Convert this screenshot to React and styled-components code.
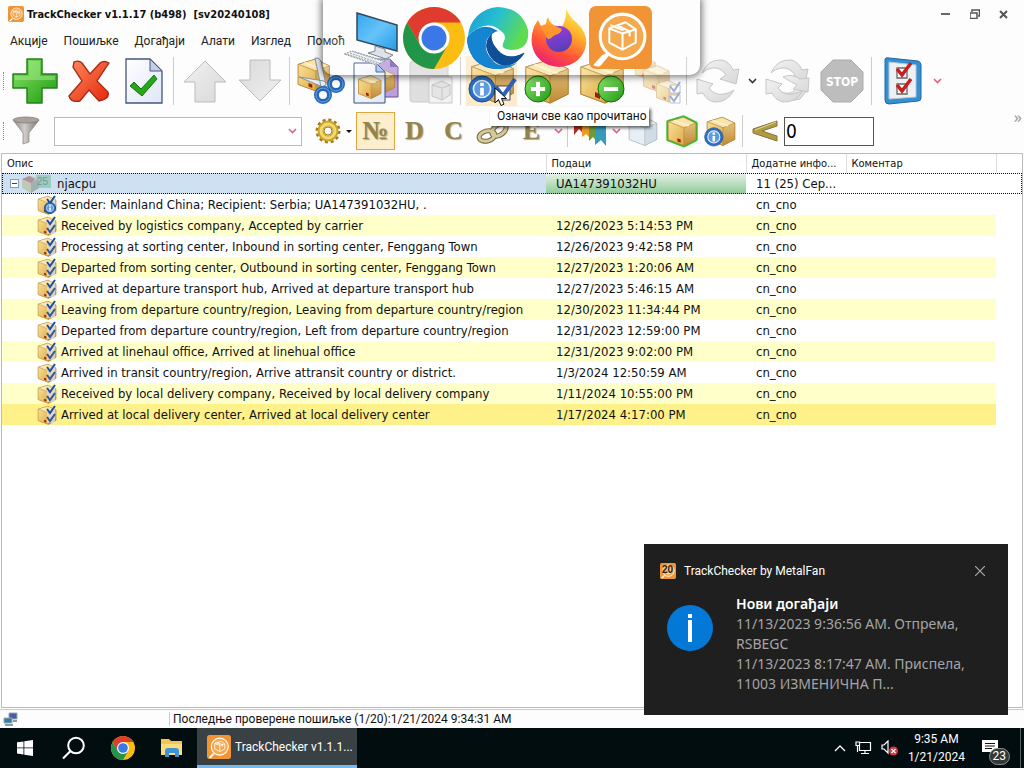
import React from 'react'
import styled, { createGlobalStyle } from 'styled-components';

const tahoma = '"DejaVu Sans Condensed", "DejaVu Sans", sans-serif';
const segoe = '"Noto Sans", "Open Sans", sans-serif';
const compact = 'Roboto, "Noto Sans", sans-serif';

const events = [
    { text: 'Sender: Mainland China; Recipient: Serbia; UA147391032HU, .', date: '', info: true },
    { text: 'Received by logistics company, Accepted by carrier', date: '12/26/2023 5:14:53 PM' },
    { text: 'Processing at sorting center, Inbound in sorting center, Fenggang Town', date: '12/26/2023 9:42:58 PM' },
    { text: 'Departed from sorting center, Outbound in sorting center, Fenggang Town', date: '12/27/2023 1:20:06 AM' },
    { text: 'Arrived at departure transport hub, Arrived at departure transport hub', date: '12/27/2023 5:46:15 AM' },
    { text: 'Leaving from departure country/region, Leaving from departure country/region', date: '12/30/2023 11:34:44 PM' },
    { text: 'Departed from departure country/region, Left from departure country/region', date: '12/31/2023 12:59:00 PM' },
    { text: 'Arrived at linehaul office, Arrived at linehual office', date: '12/31/2023 9:02:00 PM' },
    { text: 'Arrived in transit country/region, Arrive attransit country or district.', date: '1/3/2024 12:50:59 AM' },
    { text: 'Received by local delivery company, Received by local delivery company', date: '1/11/2024 10:55:00 PM' },
    { text: 'Arrived at local delivery center, Arrived at local delivery center', date: '1/17/2024 4:17:00 PM', latest: true },
];

const menus = ['Акције', 'Пошиљке', 'Догађаји', 'Алати', 'Изглед', 'Помоћ'];

const GlobalStyle = createGlobalStyle`
  * { box-sizing: border-box; }
  body { margin: 0; background: #fdfdfd; overflow: hidden; }
  button, input { font-family: inherit; }
  svg { display: block; flex: none; }
`;

/* gradients shared by every icon */
const Gradients = () => (
    <HiddenSvg aria-hidden="true">
        <defs>
            <linearGradient id="green" x1="0" y1="0" x2="1" y2="1">
                <stop offset="0" stopColor="#8be56b" /><stop offset="1" stopColor="#1f9a12" />
            </linearGradient>
            <linearGradient id="red" x1="0" y1="0" x2="1" y2="1">
                <stop offset="0" stopColor="#ff8a5c" /><stop offset="1" stopColor="#e3260c" />
            </linearGradient>
            <linearGradient id="paper" x1="0" y1="0" x2="1" y2="1">
                <stop offset="0" stopColor="#ffffff" /><stop offset="1" stopColor="#dfe6f7" />
            </linearGradient>
            <linearGradient id="grey" x1="0" y1="0" x2="1" y2="1">
                <stop offset="0" stopColor="#f1f1f1" /><stop offset="1" stopColor="#d8d8d8" />
            </linearGradient>
            <linearGradient id="left" x1="0" y1="0" x2="1" y2="1">
                <stop offset="0" stopColor="#f8e09a" /><stop offset="1" stopColor="#dfab45" />
            </linearGradient>
            <linearGradient id="right" x1="0" y1="0" x2="0" y2="1">
                <stop offset="0" stopColor="#e2c07a" /><stop offset="1" stopColor="#c08a35" />
            </linearGradient>
            <linearGradient id="screen" x1="0" y1="0" x2="1" y2="1">
                <stop offset="0" stopColor="#35a6f0" /><stop offset="0.5" stopColor="#66c3f8" /><stop offset="1" stopColor="#239ae8" />
            </linearGradient>
            <linearGradient id="edgeTop" x1="0" y1="0" x2="1" y2="0.4">
                <stop offset="0" stopColor="#189bd8" /><stop offset="0.5" stopColor="#26bfd0" /><stop offset="1" stopColor="#5fdb52" />
            </linearGradient>
            <linearGradient id="edgeBlue" x1="0" y1="0" x2="1" y2="1">
                <stop offset="0" stopColor="#1590d9" /><stop offset="1" stopColor="#0a54a2" />
            </linearGradient>
            <linearGradient id="fox" x1="0.8" y1="0" x2="0.3" y2="1">
                <stop offset="0" stopColor="#fff04a" /><stop offset="0.35" stopColor="#ffb02c" /><stop offset="0.7" stopColor="#ff5238" /><stop offset="1" stopColor="#e91f7b" />
            </linearGradient>
            <linearGradient id="globe" x1="0" y1="0" x2="0.3" y2="1">
                <stop offset="0" stopColor="#a13be0" /><stop offset="1" stopColor="#5b3fb8" />
            </linearGradient>
            <linearGradient id="funnel" x1="0" y1="0" x2="1" y2="0">
                <stop offset="0" stopColor="#8c8785" /><stop offset="0.45" stopColor="#d2cdca" /><stop offset="1" stopColor="#777170" />
            </linearGradient>
        </defs>
    </HiddenSvg>
);

const Parcel = ({ pale, transform }) => (
    <g transform={transform} stroke={pale ? '#9fb0bc' : '#8f641c'} strokeWidth="1.2" strokeLinejoin="round">
        <path d="M3 10 26 3 45 12 45 37 27 46 3 37Z" fill="#e6b455" />
        <g strokeWidth="0.7" stroke={pale ? '#a9b9c4' : '#b98532'}>
            <path d="M3 10 26 3 45 12 27 19Z" fill={pale ? '#f4f9fc' : '#f9e5ac'} />
            <path d="M3 10 27 19V46L3 37Z" fill={pale ? '#e6eff5' : 'url(#left)'} />
            <path d="M27 19 45 12V37L27 46Z" fill={pale ? '#cfdde6' : 'url(#right)'} />
            <path d="M13 7 36 15.500 33 17 10 8Z" fill={pale ? '#fff' : '#fdf2cf'} stroke="none" />
        </g>
        {!pale && <path d="M17 35 22 37V42L17 40Z" fill="#9c1d12" stroke="none" />}
    </g>
);

const Round = ({ cx, cy, r, kind }) => (
    <g>
        <circle cx={cx} cy={cy} r={r} fill={kind === 'info' ? '#2d6fc4' : 'url(#green)'} stroke={kind === 'info' ? '#194b91' : '#12700d'} />
        {kind === 'info' && <circle cx={cx} cy={cy} r={r * 0.66} fill="#5d9ade" stroke="#e3effc" strokeWidth={r * 0.12} />}
        {kind === 'info' && <path d={`M${cx} ${cy - r * 0.1}V${cy + r * 0.5}M${cx} ${cy - r * 0.48}V${cy - r * 0.24}`} stroke="#fff" strokeWidth={r * 0.28} />}
        {kind !== 'info' && <path d={`M${cx - r * 0.55} ${cy}h${r * 1.1}`} stroke="#fff" strokeWidth="4" />}
        {kind === 'plus' && <path d={`M${cx} ${cy - r * 0.55}v${r * 1.1}`} stroke="#fff" strokeWidth="4" />}
    </g>
);

const PlusIcon = () => (
    <svg width="48" height="48" viewBox="0 0 48 48">
        <path d="M17 2h15v15h15v14H32v15H17V31H3V17h14Z" fill="url(#green)" stroke="#21821a" strokeWidth="1.500" strokeLinejoin="round" />
        <path d="M19 4h11v15h15v4H5v-4h14Z" fill="#a5ee89" opacity="0.5" />
    </svg>
);

const CrossIcon = () => (
    <svg width="48" height="48" viewBox="0 0 48 48">
        <path d="M9 5Q14 3 17 6L25 17 35 6Q39 3 44 6L32 24 43 35Q45 40 38 43L34 44 24 33 15 44Q6 46 4 39L17 24 8 10Z" fill="url(#red)" stroke="#a52814" strokeWidth="1.300" />
    </svg>
);

const CheckDocIcon = () => (
    <svg width="48" height="48" viewBox="0 0 48 48">
        <path d="M6 2H30L42 14V46H6Z" fill="url(#paper)" stroke="#46577e" strokeWidth="1.300" />
        <path d="M30 2V14H42Z" fill="#c3cee4" stroke="#46577e" />
        <path d="M10 29 14 25 21 32 34 18 37 22 22 39Z" fill="#27a51b" stroke="#187511" strokeLinejoin="round" />
    </svg>
);

const ArrowIcon = ({ down }) => (
    <svg width="48" height="48" viewBox="0 0 48 48">
        <path d="M24 4 45 25H34V45H14V25H3Z" transform={down ? 'rotate(180 24 24)' : undefined} fill="url(#grey)" stroke="#bcbcbc" strokeLinejoin="round" />
    </svg>
);

const CutIcon = () => (
    <svg width="50" height="48" viewBox="0 0 50 48">
        <Parcel transform="scale(.74)" />
        <path d="M19 1Q23 0 25 4L30 28 25 30ZM3 20 28 24 34 29 27 30Z" fill="#e9edf2" stroke="#8691a0" />
        <circle cx="40" cy="27" r="6.500" fill="none" stroke="#2467b8" strokeWidth="5" />
        <circle cx="27" cy="38" r="6.500" fill="none" stroke="#2467b8" strokeWidth="5" />
        <circle cx="40" cy="27" r="7" fill="none" stroke="#6ba5e4" />
        <circle cx="27" cy="38" r="7" fill="none" stroke="#6ba5e4" />
    </svg>
);

const CopyIcon = () => (
    <svg width="48" height="48" viewBox="0 0 48 48">
        <path d="M21 2H38L46 10V40H21Z" fill="#b9a0dc" stroke="#6b4d98" />
        <path d="M38 2V10H46Z" fill="#8061ad" />
        <Parcel transform="translate(20 12) scale(.5)" />
        <path d="M2 6H24L33 15V46H2Z" fill="url(#paper)" stroke="#34517f" />
        <path d="M24 6V15H33Z" fill="#9cc7f0" stroke="#34517f" />
        <Parcel transform="translate(5 17) scale(.53)" />
    </svg>
);

const PasteIcon = () => (
    <svg width="48" height="48" viewBox="0 0 48 48">
        <rect x="3" y="4" width="38" height="41" rx="3" fill="#dedede" stroke="#cacaca" />
        <rect x="12" y="1" width="20" height="9" rx="2" fill="#eee" stroke="#c4c4c4" />
        <path d="M22 20H45V46H22Z" fill="#f2f2f2" stroke="#c9c9c9" />
        <g fill="#e4e4e4" stroke="#bdbdbd" strokeWidth="0.800" strokeLinejoin="round">
            <path d="M25 28 35 24 43 28V38L35 43 25 39Z" />
            <path d="M25 28 35 31 43 28M35 31V43" />
        </g>
    </svg>
);

const ReadAllIcon = () => (
    <svg width="50" height="48" viewBox="0 0 50 48">
        <Parcel transform="translate(2 0) scale(.98)" />
        <rect x="29" y="29" width="14" height="14" fill="#fff" stroke="#445" />
        <path d="M29 30 36 39 48 22" fill="none" stroke="#2c62bb" strokeWidth="4" />
        <Round cx={15} cy={32} r={13} kind="info" />
    </svg>
);

const BadgeParcelIcon = ({ kind }) => (
    <svg width="48" height="48" viewBox="0 0 48 48">
        <Parcel />
        <Round cx={kind === 'plus' ? 15 : 33} cy={32} r={13} kind={kind} />
    </svg>
);

const MultiIcon = () => (
    <svg width="48" height="48" viewBox="0 0 48 48" opacity="0.5">
        <Parcel transform="translate(1 0) scale(.47)" />
        <Parcel transform="translate(9 7) scale(.6)" />
        <Parcel transform="translate(22 22) scale(.5)" />
        <path d="M37 28H47V36H37ZM37 38H47V46H37Z" fill="#fff" stroke="#889" />
        <path d="M37 29 41 34 47 25M37 39 41 44 47 35" fill="none" stroke="#3a5cae" strokeWidth="2" />
    </svg>
);

const RefreshIcon = ({ double }) => (
    <svg width="48" height="48" viewBox="0 0 48 48">
        <g fill="url(#grey)" stroke="#c6c6c6" strokeLinejoin="round">
            {double && <path d="M13 36Q19 47 37 42L45 32 34 31Q30 36 27 36Z" />}
            <path d="M8 16Q14 2 28 3 36 5 39 13L45 12 42 27 26 22 32 18Q27 10 18 11 12 12 8 16Z" />
            <path d="M40 33Q33 46 20 45 12 43 9 36L3 37 3 22 19 27 15 31Q21 39 30 37 36 36 40 33Z" />
            {double && <path d="M20 20Q29 16 37 22L46 21 45 35 30 32 34 28Q28 25 20 20Z" />}
        </g>
    </svg>
);

const StopIcon = () => (
    <svg width="48" height="48" viewBox="0 0 48 48">
        <path d="M15 3H33L45 15V33L33 45H15L3 33V15Z" fill="#bdbdbd" stroke="#acacac" />
        <text x="24" y="29" textAnchor="middle" fontFamily="DejaVu Sans Condensed, sans-serif" fontWeight="bold" fontSize="12" fill="#fff">STOP</text>
    </svg>
);

const ListIcon = () => (
    <svg width="44" height="48" viewBox="0 0 44 48">
        <path d="M4 2Q5 0 8 1L37 4Q40 5 40 8V41Q40 44 37 44L8 47Q4 47 4 43Z" fill="#3590d2" stroke="#1f66a4" />
        <path d="M8 5 35 8V40L8 42Z" fill="#eef1f3" stroke="#b6c6d3" />
        <path d="M16 11H26V21H16ZM16 27H26V37H16Z" fill="#fff" stroke="#666" strokeWidth="1.300" />
        <path d="M16 12 21 18 30 6M16 28 21 34 30 22" fill="none" stroke="#cb1d1d" strokeWidth="3.500" />
    </svg>
);

const FunnelIcon = () => (
    <svg width="30" height="30" viewBox="0 0 30 30">
        <path d="M2 4Q15 9 28 4L18 17V26L12 28V17Z" fill="url(#funnel)" stroke="#8a8583" strokeWidth="0.700" />
        <ellipse cx="15" cy="4" rx="13" ry="3" fill="#a9a19c" stroke="#7d7876" strokeWidth="0.700" />
    </svg>
);

const GearIcon = () => (
    <svg width="30" height="30" viewBox="0 0 30 30">
        <circle cx="15" cy="15" r="11" fill="none" stroke="#a07c16" strokeWidth="3" strokeDasharray="3 2.760" />
        <circle cx="15" cy="15" r="7.500" fill="none" stroke="#caa22c" strokeWidth="6" />
        <circle cx="15" cy="15" r="7" fill="none" stroke="#f2da72" strokeWidth="3" />
        <circle cx="15" cy="15" r="4" fill="#fdfdfd" stroke="#a07c16" />
    </svg>
);

const ChainIcon = () => (
    <svg width="34" height="30" viewBox="0 0 34 30">
        <g fill="none" stroke="#796a42" strokeWidth="5"><ellipse cx="11" cy="20" rx="8" ry="5" transform="rotate(-15 11 20)" /><ellipse cx="23" cy="14" rx="8" ry="5" transform="rotate(-35 23 14)" /></g>
        <g fill="none" stroke="#d6c99c" strokeWidth="3"><ellipse cx="11" cy="20" rx="8" ry="5" transform="rotate(-15 11 20)" /><ellipse cx="23" cy="14" rx="8" ry="5" transform="rotate(-35 23 14)" /></g>
    </svg>
);

const RibbonsIcon = () => (
    <svg width="34" height="32" viewBox="0 0 34 32">
        <path d="M1 0H12V20L6 14 1 20Z" fill="#b92a20" />
        <path d="M9 0H18V24L13 19 9 22Z" fill="#ee9b25" />
        <path d="M16 0H25V28L20 22 16 26Z" fill="#719a38" />
        <path d="M22 0H33V31L28 25 22 30Z" fill="#359bbb" />
    </svg>
);

const SmallParcelIcon = ({ pale, outline, info }) => (
    <svg width="34" height="34" viewBox="-2 -2 52 52">
        {outline && <path d="M3 10 26 3 45 12 45 37 27 46 3 37Z" fill="none" stroke={outline} strokeWidth="6" strokeLinejoin="round" />}
        <Parcel pale={pale} />
        {info && <Round cx={13} cy={33} r={14} kind="info" />}
    </svg>
);

const LessIcon = () => (
    <svg width="28" height="24" viewBox="0 0 28 24">
        <path d="M26 2V7L11 12 26 17V22L2 14V10Z" fill="#b39a3e" stroke="#827443" />
        <path d="M25 3 4 11" stroke="#e7d891" />
    </svg>
);

const Chevron = ({ color = '#e0637c' }) => (
    <svg width="9" height="6" viewBox="0 0 9 6"><path d="M1 1 4.500 4.500 8 1" fill="none" stroke={color} strokeWidth="1.600" /></svg>
);

const TrackerLogo = ({ size }) => (
    <svg width={size} height={size} viewBox="0 0 62 62">
        <rect width="62" height="62" rx="7" fill="#f09436" />
        <g fill="none" stroke="#fff" strokeWidth="2" strokeLinejoin="round">
            <circle cx="33" cy="30" r="22" strokeWidth="3" fill="#f4a94e" />
            <path d="M17 47 13 49 5 58Q10 61 13 56L19 49Z" fill="#fff" strokeWidth="1" />
            <path d="M20 22 36 16 46 23V36L33 43 20 36ZM20 22 33 27 46 23M33 27V43M28 19 40 25V30M21 19 34 24" />
        </g>
    </svg>
);

const ChromeLogo = ({ size }) => (
    <svg width={size} height={size} viewBox="0 0 62 62">
        <circle cx="31" cy="31" r="31" fill="#fbbd12" />
        <path d="M4.200 15.500A31 31 0 0 1 57.800 15.500H31L17.600 38.700Z" fill="#df3b2f" />
        <path d="M4.200 15.500A31 31 0 0 0 31 62L44.400 38.700 31 46.500 17.600 38.700Z" fill="#239548" />
        <circle cx="31" cy="31" r="15.500" fill="#fff" />
        <circle cx="31" cy="31" r="12.500" fill="#3a78e8" />
    </svg>
);

const EdgeLogo = () => (
    <svg width="62" height="62" viewBox="0 0 62 62">
        <path d="M1 29A31 31 0 0 1 31 0Q55 1 61 23 63 43 44 43 33 42 36 36 40 29 34 24 19 11 1 29Z" fill="url(#edgeTop)" />
        <path d="M1 29Q15 14 29 23 37 27 37 31 29 22 22 29 15 38 22 49 29 59 36 62 5 64 0 35Z" fill="url(#edgeBlue)" />
        <path d="M29 24Q19 29 19 39 22 55 37 59 49 59 57 47 58 45 56 46 41 54 31 43 24 33 29 24Z" fill="#0f4f98" />
        <path d="M0 31Q2 57 27 62 41 63 50 56 28 64 20 46 15 33 27 24 11 17 0 31Z" fill="#1585d2" />
        <path d="M25 27Q32 21 37 27 39 31 36 36 33 43 44 43 52 44 57 40 60 40 56 46 42 53 32 44 23 35 25 27Z" fill="#fff" />
    </svg>
);

const FirefoxLogo = () => (
    <svg width="56" height="58" viewBox="0 0 56 58">
        <path d="M35 0Q39 9 46 14 57 25 55 36 51 56 28 58 5 56 1 36-1 22 7 11L10 17 15 15Q15 11 17 8 19 16 26 17L28 20Q36 14 35 0Z" fill="url(#fox)" />
        <circle cx="28" cy="30" r="13" fill="url(#globe)" />
        <path d="M10 17Q20 15 26 18L31 20Q30 25 24 26 21 28 20 29 16 32 15 27Z" fill="#ff962d" />
    </svg>
);

const ComputerIcon = () => (
    <svg width="58" height="56" viewBox="0 0 58 56">
        <path d="M14 3 54 15V41L14 30Z" fill="url(#screen)" stroke="#33475c" strokeWidth="1.500" />
        <path d="M32 36 42 39V42L50 45 43 49 25 43 32 41Z" fill="#dce2e7" stroke="#7a8792" />
        <path d="M9 41 42 51 33 55 1 44Z" fill="#f2f4f5" stroke="#8c979f" strokeDasharray="2 1" />
        <path d="M7 43 36 53M11 42 39 51M4 44 34 54" stroke="#98a2aa" strokeDasharray="2 1" />
    </svg>
);

const EventIcon = ({ info }) => (
    <svg width="20" height="20" viewBox="0 0 20 20">
        <Parcel transform="scale(.42)" />
        <path d="M10 4H18V18H10Z" fill="#dfe7f3" opacity="0.700" />
        <path d="M10 4 13 8 18 1" fill="none" stroke="#1f4c99" strokeWidth="2" />
        {!info && <path d="M10 12 13 16 18 9" fill="none" stroke="#33588f" strokeWidth="2" />}
        {info && <Round cx={13} cy={13} r={5.5} kind="info" />}
    </svg>
);

const PackageIcon = () => (
    <svg width="32" height="18" viewBox="0 0 32 18" opacity="0.750">
        <rect x="15" y="0" width="15" height="13" fill="#8fc3ae" />
        <path d="M1 4 10 1 18 4V13L10 18 1 13Z" fill="#b9c2a4" />
        <path d="M10 7 18 4V13L10 18Z" fill="#8fa09b" />
        <path d="M1 4 8 1 14 4 10 8Z" fill="#a8767c" />
        <text x="16" y="10" fontSize="10" fontFamily="Liberation Sans, sans-serif" fill="#4d8478">25</text>
    </svg>
);

const CursorIcon = () => (
    <svg width="14" height="20" viewBox="0 0 14 20">
        <path d="M1 1V16L4.500 12.500 7 18.500 10 17.200 7.500 11.500H12.500Z" fill="#fff" stroke="#111" />
    </svg>
);

const mainTools = [
    { label: 'Додај', icon: <PlusIcon /> },
    { label: 'Обриши', icon: <CrossIcon /> },
    { label: 'Потврди', icon: <CheckDocIcon /> },
    { split: true },
    { label: 'Горе', icon: <ArrowIcon /> },
    { label: 'Доле', icon: <ArrowIcon down /> },
    { split: true },
    { label: 'Исеци', icon: <CutIcon /> },
    { label: 'Копирај', icon: <CopyIcon /> },
    { label: 'Налепи', icon: <PasteIcon /> },
    { split: true },
    { label: 'Означи све', icon: <ReadAllIcon />, hover: true },
    { label: 'Додај пошиљку', icon: <BadgeParcelIcon kind="plus" /> },
    { label: 'Уклони пошиљку', icon: <BadgeParcelIcon kind="minus" /> },
    { label: 'Пошиљке', icon: <MultiIcon /> },
    { split: true },
    { label: 'Провери', icon: <RefreshIcon /> },
    { label: 'Опције провере', icon: <Chevron color="#333" />, narrow: true },
    { label: 'Провери све', icon: <RefreshIcon double /> },
    { label: 'Заустави', icon: <StopIcon /> },
    { split: true },
    { label: 'Листа', icon: <ListIcon /> },
    { label: 'Још', icon: <Chevron />, narrow: true },
];

const Toolbars = () => (
    <>
        <MainBar>
            <Grip />
            {mainTools.map((tool, i) => tool.split
                ? <Split key={i} />
                : <ToolButton key={i} aria-label={tool.label} $hover={tool.hover} $narrow={tool.narrow}>{tool.icon}</ToolButton>)}
        </MainBar>
        <FilterBar>
            <Grip />
            <SmallButton aria-label="Филтер"><FunnelIcon /></SmallButton>
            <Combo>
                <input aria-label="Претрага" />
                <button aria-label="Историја"><Chevron /></button>
            </Combo>
            <SmallButton aria-label="Подешавања"><GearIcon /></SmallButton>
            <Caret />
            <SmallButton $active>№</SmallButton>
            <SmallButton>D</SmallButton>
            <SmallButton>C</SmallButton>
            <SmallButton aria-label="Веза"><ChainIcon /></SmallButton>
            <SmallButton>E</SmallButton>
            <SmallButton aria-label="Још поља" $narrow><Chevron /></SmallButton>
            <Split $short />
            <SmallButton aria-label="Ознаке"><RibbonsIcon /></SmallButton>
            <SmallButton aria-label="Још ознака" $narrow><Chevron /></SmallButton>
            <SmallButton aria-label="Празне"><SmallParcelIcon pale /></SmallButton>
            <SmallButton aria-label="Активне"><SmallParcelIcon outline="#35c22a" /></SmallButton>
            <SmallButton aria-label="Инфо"><SmallParcelIcon info /></SmallButton>
            <Split $short />
            <SmallButton aria-label="Мање"><LessIcon /></SmallButton>
            <DaysInput aria-label="Дана" defaultValue="0" />
            <More>»</More>
        </FilterBar>
    </>
);

const EventsTable = () => (
    <Panel>
        <Table>
            <colgroup>
                <col style={{ width: 544 }} /><col style={{ width: 200 }} /><col style={{ width: 100 }} /><col style={{ width: 150 }} /><col />
            </colgroup>
            <thead>
                <tr><th>Опис</th><th>Подаци</th><th>Додатне инфо...</th><th>Коментар</th><th /></tr>
            </thead>
            <tbody>
                <ParcelRow>
                    <td><Cell $root><Toggle aria-label="Скупи" /><PackageIcon /><span>njacpu</span></Cell></td>
                    <td>UA147391032HU</td>
                    <td>11 (25) Сер...</td>
                    <td /><td />
                </ParcelRow>
                {events.map((event, i) => (
                    <EventRow key={i} $odd={i % 2 === 1} $latest={event.latest}>
                        <td><Cell><EventIcon info={event.info} /><span>{event.text}</span></Cell></td>
                        <td>{event.date}</td>
                        <td>cn_cno</td>
                        <td /><td />
                    </EventRow>
                ))}
            </tbody>
        </Table>
    </Panel>
);

const Toast = () => (
    <ToastBox role="status">
        <ToastHead>
            <CountLogo><TrackerLogo size={16} /><b>20</b></CountLogo>
            <span>TrackChecker by MetalFan</span>
            <button aria-label="Затвори">
                <svg width="10" height="10" viewBox="0 0 10 10"><path d="M0 0 10 10M10 0 0 10" stroke="#a9a9a9" strokeWidth="1.200" /></svg>
            </button>
        </ToastHead>
        <ToastBody>
            <svg width="46" height="46" viewBox="0 0 46 46">
                <circle cx="23" cy="23" r="23" fill="#0478d7" />
                <path d="M23 15V37M23 9V13" stroke="#fff" strokeWidth="4" />
            </svg>
            <div>
                <h2>Нови догађаји</h2>
                <p>11/13/2023 9:36:56 AM. Отпрема,<br />RSBEGC<br />11/13/2023 8:17:47 AM. Приспела,<br />11003 ИЗМЕНИЧНА П...</p>
            </div>
        </ToastBody>
    </ToastBox>
);

const Taskbar = () => (
    <TaskbarBox>
        <TaskButton aria-label="Start">
            <svg width="16" height="16" viewBox="0 0 16 16"><path d="M0 2.300 6.500 1.400V7.500H0ZM7.300 1.300 16 0V7.500H7.300ZM0 8.300H6.500V14.500L0 13.600ZM7.300 8.300H16V16L7.300 14.700Z" fill="#fff" /></svg>
        </TaskButton>
        <TaskButton aria-label="Search">
            <svg width="24" height="24" viewBox="0 0 24 24"><circle cx="14" cy="9.500" r="7.800" fill="none" stroke="#fff" strokeWidth="2" /><path d="M8.500 15 1 22.500" stroke="#fff" strokeWidth="2.200" /></svg>
        </TaskButton>
        <TaskButton aria-label="Chrome"><ChromeLogo size={24} /></TaskButton>
        <TaskButton aria-label="Explorer">
            <svg width="22" height="20" viewBox="0 0 22 20">
                <path d="M0 1H8L10 3H21V17H0Z" fill="#f4c64f" /><path d="M0 6H21V17H0Z" fill="#fbdc7e" />
                <path d="M4 19V13Q4 10 7 10H15Q18 10 18 13V19H14V15H8V19Z" fill="#3e95d1" />
            </svg>
        </TaskButton>
        <AppButton><TrackerLogo size={24} /><span>TrackChecker v1.1.1...</span></AppButton>
        <Tray>
            <svg width="12" height="7" viewBox="0 0 12 7"><path d="M1 6 6 1 11 6" fill="none" stroke="#fff" strokeWidth="1.300" /></svg>
            <svg width="17" height="14" viewBox="0 0 17 14"><path d="M5 1.500H15.500V9.500H4.500V5M10 9.500V12.500M6 12.500H14M1 1H4.500V4.500H1ZM2.500 4.500V11" fill="none" stroke="#fff" strokeWidth="1.200" /></svg>
            <svg width="18" height="16" viewBox="0 0 18 16"><path d="M1 5H3L7 1V13L3 9H1Z" fill="none" stroke="#fff" strokeWidth="1.200" /><circle cx="12.500" cy="11" r="4.500" fill="#d23844" /><path d="M10.500 9 14.500 13M14.500 9 10.500 13" stroke="#fff" strokeWidth="1.200" /></svg>
            <Clock><span>9:35 AM</span><span>1/21/2024</span></Clock>
            <Notifications aria-label="Обавештења">
                <svg width="16" height="16" viewBox="0 0 16 16"><path d="M0 0H16V12H12V16L8 12H0Z" fill="#fff" /><path d="M3 3.500H13M3 6H13M3 8.500H10" stroke="#111" /></svg>
                <span>23</span>
            </Notifications>
        </Tray>
    </TaskbarBox>
);

export default function App() {
    return (
        <Desktop>
            <GlobalStyle />
            <Gradients />
            <TitleBar>
                <TrackerLogo size={16} />
                <h1>TrackChecker v1.1.17 (b498)&nbsp; [sv20240108]</h1>
                <button aria-label="Умањи"><svg width="10" height="10" viewBox="0 0 10 10"><path d="M0 5H9" stroke="#666" strokeWidth="2" /></svg></button>
                <button aria-label="Врати"><svg width="10" height="10" viewBox="0 0 10 10"><path d="M0 4H7V9.500H0ZM2 3V1H9.500V7H8" fill="none" stroke="#555" strokeWidth="1.500" /></svg></button>
                <button aria-label="Затвори"><svg width="9" height="9" viewBox="0 0 9 9"><path d="M1 1 8 8M8 1 1 8" stroke="#555" strokeWidth="2" /></svg></button>
            </TitleBar>
            <MenuBar>{menus.map(menu => <a href="#menu" key={menu}>{menu}</a>)}</MenuBar>
            <Toolbars />
            <EventsTable />
            <StatusBar>
                <svg width="16" height="14" viewBox="0 0 16 14"><path d="M6 1H14V7H6Z" fill="#4c5aa7" stroke="#9aa" /><path d="M1 6H9V11H1Z" fill="#2f7dab" stroke="#9aa" /><path d="M2 13H10M10 9H14" stroke="#678" strokeWidth="1.500" /></svg>
                <span>Последње проверене пошиљке (1/20):1/21/2024 9:34:31 AM</span>
            </StatusBar>
            <Taskbar />
            <Dock><ComputerIcon /><ChromeLogo size={62} /><EdgeLogo /><FirefoxLogo /><TrackerLogo size={63} /></Dock>
            <Tooltip role="tooltip">Означи све као прочитано</Tooltip>
            <Pointer><CursorIcon /></Pointer>
            <Toast />
        </Desktop>
    )
}

const HiddenSvg = styled.svg`
  position: absolute;
  width: 0;
  height: 0;
`;

const Desktop = styled.div`
  position: relative;
  display: flex;
  flex-direction: column;
  min-height: 100vh;
  background: #fdfdfd;
  color: #111;
  font: 13px ${tahoma};
`;

const TitleBar = styled.header`
  display: flex;
  align-items: center;
  height: 28px;
  padding: 0 6px 0 8px;
  h1 { flex: 1; margin: 0 0 0 3px; font: bold 11px ${tahoma}; white-space: nowrap; }
  button { display: flex; justify-content: center; width: 29px; padding: 0; border: 0; background: none; }
`;

const MenuBar = styled.nav`
  display: flex;
  align-items: center;
  gap: 16px;
  height: 25px;
  padding: 0 10px;
  font: 12px ${compact};
  a { color: #222; text-decoration: none; }
`;

const MainBar = styled.div`
  display: flex;
  align-items: center;
  height: 56px;
`;

const FilterBar = styled.div`
  display: flex;
  align-items: center;
  height: 44px;
`;

const Grip = styled.span`
  width: 3px;
  height: 18px;
  margin-left: 3px;
  border-left: 1px dotted #888;
`;

const Split = styled.span`
  width: 1px;
  height: ${props => props.$short ? '32px' : '48px'};
  margin: 0 ${props => props.$short ? '2px' : '3px'} 0 2px;
  background: #ccc;
`;

const ToolButton = styled.button`
  display: flex;
  align-items: center;
  justify-content: center;
  width: ${props => props.$narrow ? '14px' : '51px'};
  height: 50px;
  margin: 0 ${props => props.$narrow ? '0' : '2px'};
  padding: 0;
  border: 0;
  background: ${props => props.$hover ? '#fdebcb' : 'none'};
`;

const SmallButton = styled.button`
  display: flex;
  align-items: center;
  justify-content: center;
  width: ${props => props.$narrow ? '14px' : '39px'};
  height: 38px;
  padding: 0;
  border: 1px solid ${props => props.$active ? '#e0a83c' : 'transparent'};
  background: ${props => props.$active ? '#fdeecd' : 'none'};
  color: #93834f;
  font: bold 26px "Liberation Serif", serif;
  text-shadow: 1px 1px 1px #b5a878;
`;

const Combo = styled.div`
  display: flex;
  align-items: center;
  width: 248px;
  height: 29px;
  margin: 0 6px 0 9px;
  border: 1px solid #bbb;
  background: #fff;
  input { flex: 1; min-width: 0; border: 0; background: none; }
  button { display: flex; width: 17px; padding: 0 4px; border: 0; background: none; }
`;

const Caret = styled.span`
  margin: 0 4px 0 -1px;
  border: 3px solid transparent;
  border-top-color: #111;
  border-bottom: 0;
`;

const DaysInput = styled.input`
  width: 90px;
  height: 29px;
  padding: 0 1px;
  border: 1px solid #555;
  background: #fff;
  font-size: 19px;
`;

const More = styled.span`
  margin: 0 2px 28px auto;
  color: #999;
  font: 16px ${segoe};
`;

const Panel = styled.main`
  flex: 1;
  margin: 0 1px 1px;
  border: 1px solid #bbb;
  background: #fff;
`;

const Table = styled.table`
  width: 100%;
  table-layout: fixed;
  border-collapse: collapse;
  th, td { padding: 0 0 0 10px; text-align: left; white-space: nowrap; }
  th { height: 19px; padding-left: 5px; border-right: 1px solid #ddd; font: 11px ${tahoma}; }
  th:last-child { border: 0; }
  td { height: 21px; }
`;

const ParcelRow = styled.tr`
  outline: 1px dotted #111;
  outline-offset: -1px;
  td:first-child { padding: 0; background: #cde1f2; }
  td:nth-child(2) { background: linear-gradient(#e8f1e9, #8dcb96); }
`;

const EventRow = styled.tr`
  td:not(:last-child) {
    background: ${props => props.$latest ? '#fff18a' : props.$odd ? '#ffffc9' : '#fff'};
  }
  td:first-child { padding: 0; }
`;

const Cell = styled.div`
  display: flex;
  align-items: center;
  gap: 4px;
  padding-left: ${props => props.$root ? '8px' : '35px'};
`;

const Toggle = styled.button`
  display: flex;
  align-items: center;
  width: 9px;
  height: 9px;
  margin-right: -2px;
  padding: 0 1px;
  border: 1px solid #879db3;
  background: #fff;
  &::before { content: ''; width: 5px; height: 1px; background: #345; }
`;

const StatusBar = styled.footer`
  display: flex;
  align-items: center;
  height: 19px;
  padding-left: 3px;
  border-top: 1px solid #ccc;
  font: 12px ${compact};
  svg { margin-right: 150px; }
  span { padding-left: 3px; border-left: 1px solid #ccc; }
`;

const TaskbarBox = styled.div`
  display: flex;
  height: 40px;
  background: #020d10;
  color: #fff;
  font: 12px ${compact};
`;

const TaskButton = styled.button`
  display: flex;
  align-items: center;
  justify-content: center;
  width: 49px;
  padding: 0;
  border: 0;
  background: none;
`;

const AppButton = styled.button`
  display: flex;
  align-items: center;
  gap: 4px;
  width: 160px;
  margin-left: 1px;
  padding: 0 10px;
  border: 0;
  border-bottom: 3px solid #76b9ed;
  background: #3a4144;
  color: #fff;
  font-size: 12px;
  white-space: nowrap;
`;

const Tray = styled.div`
  display: flex;
  align-items: center;
  gap: 9px;
  margin-left: auto;
  margin-right: 3px;
  padding-right: 10px;
  border-right: 1px solid #56605f;
`;

const Clock = styled.div`
  display: flex;
  flex-direction: column;
  align-items: center;
  line-height: 18px;
`;

const Notifications = styled.button`
  position: relative;
  width: 28px;
  height: 24px;
  margin-left: 8px;
  padding: 2px 0;
  border: 0;
  background: none;
  span {
    position: absolute;
    right: 0;
    bottom: -5px;
    padding: 0 3px;
    border: 1px solid #8b8f90;
    border-radius: 9px;
    background: #333839;
    color: #fff;
    font-size: 12px;
    line-height: 15px;
  }
`;

const Dock = styled.div`
  position: absolute;
  top: 0;
  left: 323px;
  display: flex;
  align-items: center;
  gap: 2px;
  width: 377px;
  height: 75px;
  padding: 0 0 0 20px;
  border-radius: 0 0 10px 10px;
  background: rgba(255, 255, 255, 0.15);
  box-shadow: 0 0 7px 2px rgba(0, 0, 0, 0.5);
`;

const Tooltip = styled.div`
  position: absolute;
  top: 107px;
  left: 490px;
  padding: 0 3px 0 7px;
  background: #fff;
  box-shadow: 2px 2px 3px rgba(0, 0, 0, 0.6);
  font: 12px/19px ${compact};
`;

const Pointer = styled.div`
  position: absolute;
  top: 87px;
  left: 494px;
`;

const ToastBox = styled.aside`
  position: absolute;
  right: 16px;
  bottom: 53px;
  width: 364px;
  height: 171px;
  padding: 16px;
  background: #1f1f1f;
  color: #fff;
  font-family: ${segoe};
`;

const ToastHead = styled.div`
  display: flex;
  align-items: center;
  gap: 8px;
  height: 21px;
  font: 12px ${compact};
  button { margin-left: auto; padding: 0 7px; border: 0; background: none; }
`;

const CountLogo = styled.div`
  position: relative;
  b { position: absolute; top: 1px; left: 2px; color: #221; font: bold 10px "Liberation Sans", sans-serif; }
`;

const ToastBody = styled.div`
  display: flex;
  gap: 23px;
  padding: 13px 7px;
  svg { margin-top: 11px; }
  h2, p { margin: 0; font-size: 14px; line-height: 20px; white-space: nowrap; }
  h2 { font-weight: 600; }
  p { color: #a5a5a5; }
`;
